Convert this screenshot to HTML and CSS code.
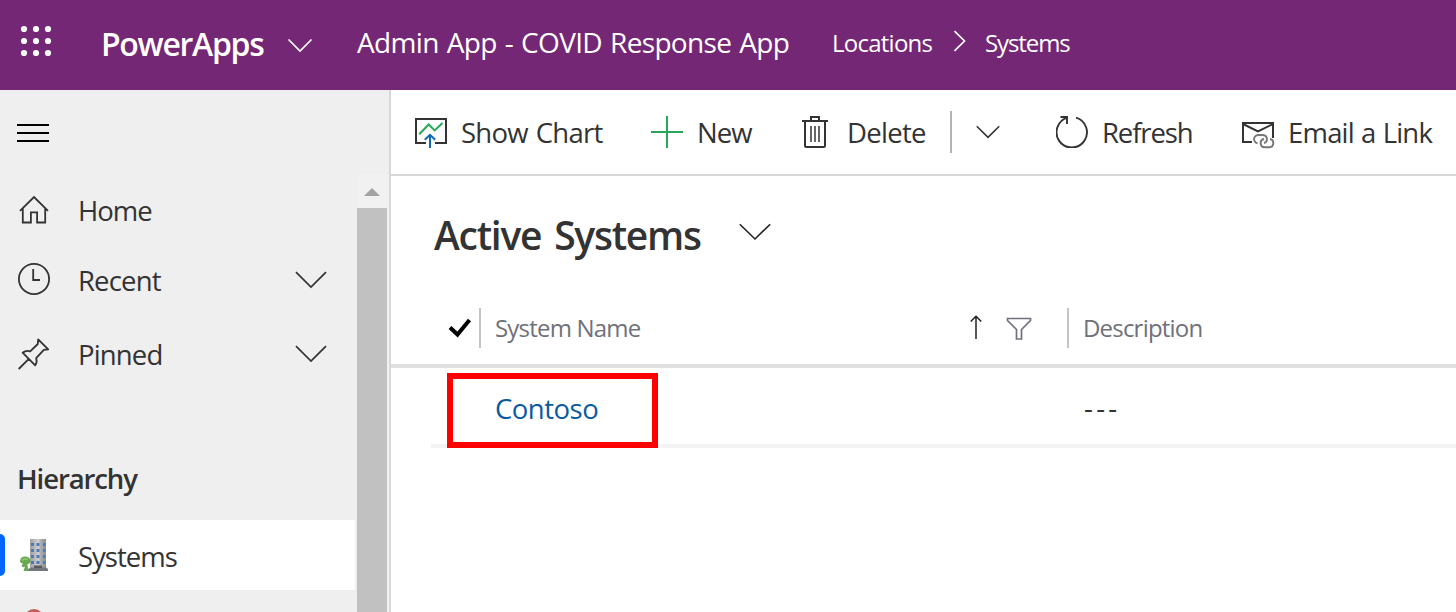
FILE: index.html
```html
<!DOCTYPE html>
<html lang="en">
<head>
<meta charset="utf-8">
<title>Active Systems</title>
<link rel="stylesheet" href="styles.css">
</head>
<body>
<header class="topbar">
  <svg class="waffle" width="32" height="32" viewBox="0 0 32 32"><g fill="#fff"><circle cx="4" cy="4" r="3.1"/><circle cx="16" cy="4" r="3.1"/><circle cx="28" cy="4" r="3.1"/><circle cx="4" cy="16" r="3.1"/><circle cx="16" cy="16" r="3.1"/><circle cx="28" cy="16" r="3.1"/><circle cx="4" cy="28" r="3.1"/><circle cx="16" cy="28" r="3.1"/><circle cx="28" cy="28" r="3.1"/></g></svg>
  <span class="brand">PowerApps</span>
  <svg class="brand-chevron" width="26" height="16" viewBox="0 0 26 16"><path d="M1.5 1.5 13 13 24.500 1.500" fill="none" stroke="#fff" stroke-width="1.700"/></svg>
  <span class="app-name">Admin App - COVID Response App</span>
  <nav class="crumbs">
    <span class="crumb crumb-locations">Locations</span>
    <svg class="crumb-sep" width="14" height="22" viewBox="0 0 14 22"><path d="M1.500 1.200 11.500 11 1.500 20.800" fill="none" stroke="#fff" stroke-width="1.700"/></svg>
    <span class="crumb crumb-systems">Systems</span>
  </nav>
</header>
<div class="shell">
  <aside class="sidebar">
    <div class="menu-row">
      <svg width="32" height="18" viewBox="0 0 32 18"><path d="M0 1H32M0 9H32M0 17H32" stroke="#000" stroke-width="2"/></svg>
    </div>
    <div class="nav-area">
      <nav class="nav">
        <a class="nav-item nav-home">
          <svg class="nav-icon" width="32" height="32" viewBox="0 0 32 32"><path d="M2 15.800 16 2 30 15.800M4.800 13.300V27.500H12.900V17.300H19.100V27.500H27.200V13.300" fill="none" stroke="#333" stroke-width="1.800"/></svg>
          <span class="label l-home">Home</span>
        </a>
        <a class="nav-item nav-recent">
          <svg class="nav-icon" width="32" height="32" viewBox="0 0 32 32"><circle cx="16" cy="16" r="15.100" fill="none" stroke="#333" stroke-width="1.800"/><path d="M15.200 6V17H22" fill="none" stroke="#333" stroke-width="1.800"/></svg>
          <span class="label l-recent">Recent</span>
          <svg class="nav-chevron" width="32" height="18" viewBox="0 0 32 18"><path d="M1 1.200 16 16 31 1.200" fill="none" stroke="#333" stroke-width="1.700"/></svg>
        </a>
        <a class="nav-item nav-pinned">
          <svg class="nav-icon" width="32" height="32" viewBox="0 0 32 32"><path d="M.7 31 10.800 20.900M4.600 14.700 17.200 27.300Q19.500 24 18.200 20.200L25.800 11.800 30.200 11.400 20.200 1.400 19.800 6 12.200 13.400Q8.500 11.700 4.600 14.700Z" fill="none" stroke="#333" stroke-width="1.800" stroke-linejoin="round"/></svg>
          <span class="label l-pinned">Pinned</span>
          <svg class="nav-chevron" width="32" height="18" viewBox="0 0 32 18"><path d="M1 1.200 16 16 31 1.200" fill="none" stroke="#333" stroke-width="1.700"/></svg>
        </a>
        <h2 class="group-title">Hierarchy</h2>
        <a class="nav-item nav-systems">
          <span class="active-mark"></span>
          <svg class="building" width="32" height="34" viewBox="0 0 32 34"><defs><linearGradient id="tower" x1="0" x2="1"><stop offset="0" stop-color="#a0a0a2"/><stop offset=".55" stop-color="#d2d2d4"/><stop offset=".62" stop-color="#b2b2b4"/><stop offset="1" stop-color="#8c8c90"/></linearGradient></defs><path d="M12 1H28V31H12Z" fill="url(#tower)"/><path d="M10 31 13 29.500H28L30 31V33H9Z" fill="#74787e"/><path d="M16 27.500H24V30H16Z" fill="#56595e"/><g fill="#4a7db8"><path d="M13 5h3v3h-3zM18.500 5h3v3h-3zM25 5h2.500v3H25zM13 11h3v3h-3zM18.500 11h3v3h-3zM25 11h2.500v3H25zM13 17h3v3h-3zM18.500 17h3v3h-3zM25 17h2.500v3H25zM13 23h3v3h-3zM18.500 23h3v3h-3zM25 23h2.500v3H25z"/></g><path d="M2 22.500Q3 18.500 7 18.500Q11.500 18.500 12.300 22Q12.800 25.500 9.300 26.500L10.500 33H5.500L7 28.500Q5 30 3.500 28L5 25.500Q2 25.500 2 22.500Z" fill="#68a84f"/><path d="M4 22.500Q7 19.500 10 22" stroke="#8cc66f" stroke-width="1.500" fill="none"/></svg>
          <span class="label l-sys">Systems</span>
        </a>
        <a class="nav-item nav-next">
          <svg width="20" height="22" viewBox="0 0 20 22"><circle cx="10" cy="11" r="10" fill="#c0605c"/></svg>
        </a>
      </nav>
      <div class="scrollbar">
        <div class="scroll-up"><svg width="16" height="8" viewBox="0 0 16 8"><path d="M8 0 16 8H0Z" fill="#a3a3a3"/></svg></div>
        <div class="scroll-thumb"></div>
      </div>
    </div>
  </aside>
  <main class="content">
    <div class="commands">
      <button class="cmd cmd-chart">
        <svg width="32" height="32" viewBox="0 0 32 32"><path d="M11 27H1V3H31V27H20" fill="none" stroke="#333" stroke-width="2"/><path d="M4.200 18.200 13.700 8.500 19.700 14.400 27.500 7" fill="none" stroke="#27a858" stroke-width="2"/><path d="M15 32V19.500M9.800 23.800 15 18.800 20.200 23.800" fill="none" stroke="#0f69b5" stroke-width="2"/></svg>
        <span class="label l-chart">Show Chart</span>
      </button>
      <button class="cmd cmd-new">
        <svg width="32" height="32" viewBox="0 0 32 32"><path d="M16 0V32M0 16H32" stroke="#27a858" stroke-width="2"/></svg>
        <span class="label l-new">New</span>
      </button>
      <button class="cmd cmd-delete">
        <svg width="26" height="32" viewBox="0 0 26 32"><path d="M0 5H26M9 5V1H17V5M3 5V29.500Q3 31 4.500 31H21.500Q23 31 23 29.500V5" fill="none" stroke="#333" stroke-width="2"/><path d="M9 10V26M13 10V26M17 10V26" stroke="#666" stroke-width="2"/></svg>
        <span class="label l-del">Delete</span>
      </button>
      <span class="cmd-divider"></span>
      <button class="cmd cmd-more"><svg width="24" height="14" viewBox="0 0 24 14"><path d="M.8 1.200 12 12.300 23.200 1.200" fill="none" stroke="#333" stroke-width="1.600"/></svg></button>
      <button class="cmd cmd-refresh">
        <svg width="32" height="32" viewBox="0 0 32 32"><path d="M20 1.700A15.200 15.200 0 1 1 11.500 1.700M4.500 1H11V8" fill="none" stroke="#333" stroke-width="1.900"/></svg>
        <span class="label l-ref">Refresh</span>
      </button>
      <button class="cmd cmd-email">
        <svg width="33" height="28" viewBox="0 0 33 28"><path d="M10 21H1V2H31V17M1 3 16 10.500 31 3" fill="none" stroke="#333" stroke-width="2"/><g fill="none" stroke="#777" stroke-width="1.900"><path d="M15.500 22.300A4.200 4.200 0 0 1 17 14H21A4.200 4.200 0 0 1 22 22.200"/><path d="M28 18A4.200 4.200 0 0 1 27 26.300H22.500A4.200 4.200 0 0 1 22 18"/></g></svg>
        <span class="label l-email">Email a Link</span>
      </button>
    </div>
    <div class="view-title">
      <h1>Active Systems</h1>
      <svg width="32" height="18" viewBox="0 0 32 18"><path d="M.8 1.200 16 16 31.200 1.200" fill="none" stroke="#222" stroke-width="1.600"/></svg>
    </div>
    <div class="grid-head">
      <svg class="check" width="24" height="20" viewBox="0 0 24 20"><path d="M2 9.500 9.500 16.500 21.500 2" fill="none" stroke="#000" stroke-width="4"/></svg>
      <div class="col col-name"><span class="col-text">System Name</span>
        <svg class="sort" width="12" height="24" viewBox="0 0 12 24"><path d="M6 24V1.500M.7 6.500 6 1.200 11.300 6.500" fill="none" stroke="#222" stroke-width="1.500"/></svg>
        <svg class="filter" width="26" height="24" viewBox="0 0 26 24"><path d="M1.500 1.500H24.500V3.500L15.500 12.500V22H10.500V12.500L1.500 3.500Z" fill="none" stroke="#70707a" stroke-width="1.700"/></svg>
      </div>
      <div class="col col-desc"><span class="col-text">Description</span></div>
    </div>
    <div class="grid-row">
      <a class="record">Contoso</a>
      <span class="cell-desc">---</span>
      <span class="highlight"></span>
    </div>
  </main>
</div>
</body>
</html>
```
FILE: styles.css
```css
* { box-sizing: border-box; }
body { margin: 0; height: 612px; overflow: hidden; background: #fff; color: #333; font-family: "Open Sans", "Noto Sans", sans-serif; font-size: 27.5px; display: flex; flex-direction: column; }
svg { display: block; flex: none; }
h1, h2 { margin: 0; font-weight: 600; }
span { white-space: nowrap; }
button { border: 0; padding: 0; background: none; font: inherit; color: inherit; }

.topbar { height: 90px; flex: none; display: flex; align-items: center; padding: 0 0 5px 20px; background: #742774; color: #fff; }
.waffle { margin-bottom: 4px; }
.brand { width: 166px; margin-left: 49px; padding-top: 2px; font-size: 32px; font-weight: 600; letter-spacing: -1.3px; }
.brand-chevron { margin: 6px 0 0 20px; }
.app-name { width: 433px; margin-left: 44px; padding-bottom: 1px; font-size: 28px; letter-spacing: -.66px; word-spacing: 1.4px; }
.crumbs { display: flex; align-items: center; margin-left: 42px; font-size: 24px; }
.crumb-locations { width: 101px; letter-spacing: -.75px; }
.crumb-systems { letter-spacing: -1.1px; }
.crumb-sep { margin: 0 18px 3px 20px; }

.shell { display: flex; height: 522px; }
.sidebar { width: 391px; flex: none; background: #efefef; border-right: 2px solid #d8d8d8; }
.menu-row { height: 84px; padding: 34px 0 0 17px; }
.nav-area { display: flex; height: 438px; }
.nav { width: 355px; overflow: hidden; }
.nav-item { display: flex; align-items: center; height: 70px; padding-left: 18px; }
.nav-home { height: 71px; padding-top: 2px; }
.nav-recent { height: 69px; }
.nav-pinned { height: 76px; padding-top: 4px; }
.nav-icon { margin-right: 28px; }
.nav-recent .nav-icon { margin-bottom: 2px; }
.nav-chevron { margin-left: auto; margin-right: 28px; }
.group-title { height: 130px; padding: 66px 0 0 17px; font-size: 27.5px; line-height: 46px; letter-spacing: -1.1px; }
.nav-systems { position: relative; background: #fff; padding-left: 18px; }
.active-mark { position: absolute; left: 0; top: 14px; width: 5px; height: 42px; background: #0066ff; border-radius: 0 5px 5px 0; }
.building { margin-right: 28px; }
.nav-next { align-items: flex-start; padding: 18px 0 0 24px; }
.scrollbar { width: 32px; margin-left: 2px; display: flex; flex-direction: column; background: #f1f1f1; padding-right: 2px; }
.scroll-up { height: 34px; display: flex; justify-content: center; padding-top: 14px; }
.scroll-thumb { flex: 1; background: #c1c1c1; }

.l-home { letter-spacing: -1px; }
.l-recent, .l-pinned { letter-spacing: -.85px; }
.l-recent { padding-top: 2px; }
.l-sys { padding-top: 2px; letter-spacing: -1px; }
.l-chart { letter-spacing: -.74px; word-spacing: 1.5px; }
.l-new { letter-spacing: -.9px; }
.l-del { letter-spacing: -.7px; }
.l-ref { letter-spacing: -1.1px; }
.l-email { letter-spacing: -.8px; word-spacing: .8px; }

.content { flex: 1; min-width: 0; }
.commands { display: flex; align-items: center; height: 86px; padding-left: 24px; border-bottom: 2px solid #d8d8d8; }
.cmd { display: flex; align-items: center; flex: none; }
.cmd .label { padding-top: 1px; }
.cmd-chart { gap: 14px; width: 236px; }
.cmd-new { gap: 14px; width: 151px; }
.cmd-delete { gap: 19px; width: 148px; }
.cmd-divider { width: 2px; height: 42px; background: #b3b3b3; }
.cmd-more { width: 104px; padding-left: 24px; }
.cmd-refresh { gap: 14px; width: 186px; }
.cmd-email { gap: 13px; }
.cmd-email svg { margin-top: 5px; }

.view-title { display: flex; align-items: center; height: 116px; padding: 0 0 2px 43px; }
.view-title h1 { width: 305px; padding-top: 2px; font-size: 39px; letter-spacing: -1.25px; word-spacing: 4px; white-space: nowrap; }
.view-title svg { margin-bottom: 2px; }
.grid-head { display: flex; align-items: center; height: 76px; border-bottom: 4px solid #e0e0e0; padding-left: 57px; font-size: 24px; color: #70707a; }
.check { margin-right: 7px; }
.col { display: flex; align-items: center; height: 40px; border-left: 2px solid #c4c4c4; padding-left: 14px; }
.col-text { padding-bottom: 2px; letter-spacing: -.8px; }
.col-name { width: 588px; }
.sort { margin: 0 0 3px auto; }
.filter { margin: 2px 35px 0 24px; }
.grid-row { position: relative; display: flex; align-items: center; height: 80px; margin-left: 40px; padding: 4px 0 0 64px; border-bottom: 4px solid #f3f3f3; }
.record { width: 589px; color: #0b5a9e; letter-spacing: -.5px; }
.cell-desc { padding-bottom: 2px; letter-spacing: 3.3px; }
.highlight { position: absolute; left: 16px; top: 5px; width: 211px; height: 75px; border: 6px solid #f00; }
```
